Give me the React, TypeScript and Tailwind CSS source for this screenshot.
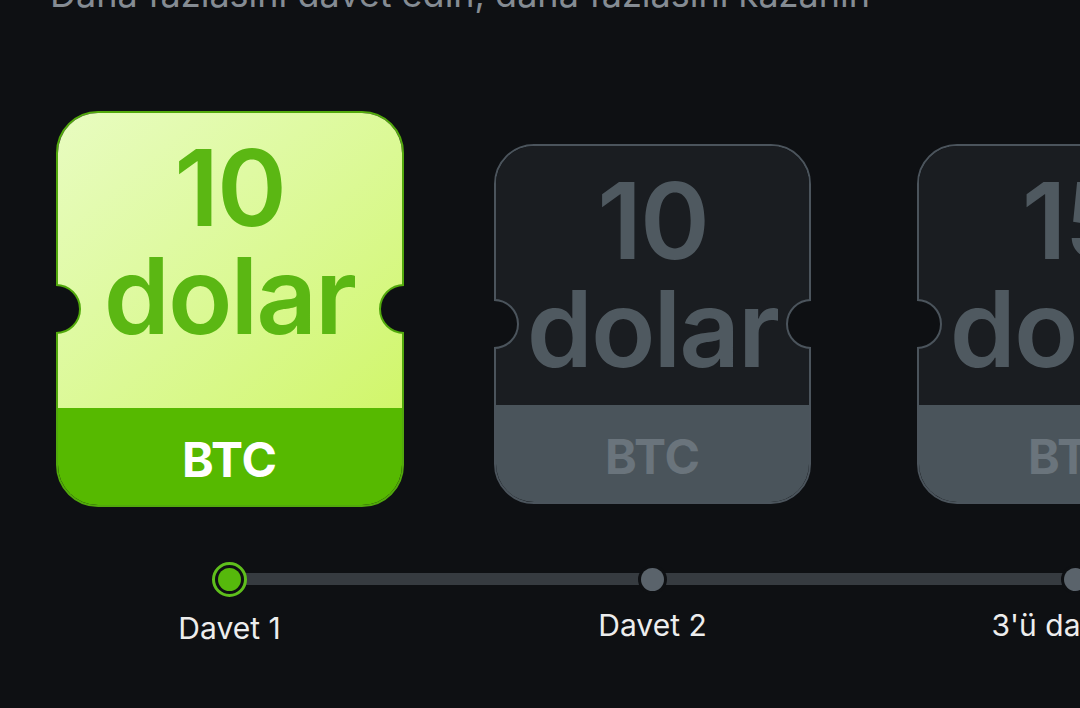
import React from 'react';

type Reward = {
    amount: string;
    unit: string;
    coin: string;
    label: string;
    active: boolean;
};

const rewards: Reward[] = [
    { amount: '10', unit: 'dolar', coin: 'BTC', label: 'Davet 1', active: true },
    { amount: '10', unit: 'dolar', coin: 'BTC', label: 'Davet 2', active: false },
    { amount: '15', unit: 'dolar', coin: 'BTC', label: "3'ü davet et", active: false },
];

const Notch: React.FC<{ side: 'left' | 'right'; active: boolean }> = ({ side, active }) => (
    <div
        className={
            'absolute top-1/2 -translate-y-1/2 w-[27px] h-[50px] overflow-hidden ' +
            (side === 'left' ? 'left-[-2px]' : 'right-[-2px]')
        }
    >
        <div
            className={
                'w-[50px] h-[50px] rounded-full border-2 bg-[#0e1013] ' +
                (side === 'left' ? 'ml-[-25px] ' : 'ml-[2px] ') +
                (active ? 'border-[#52a90c]' : 'border-[#4b545c]')
            }
        />
    </div>
);

const RewardCard: React.FC<{ reward: Reward }> = ({ reward }) => {
    const { active } = reward;
    return (
        <div
            className={
                'relative flex flex-col border-2 ' +
                (active
                    ? 'w-[348px] h-[396px] rounded-[42px] border-[#52a90c]'
                    : 'w-[317px] h-[360px] rounded-[40px] border-[#4b545c] mb-[3px]')
            }
        >
            <div
                className={
                    'flex-1 flex flex-col items-center pt-[21px] font-semibold text-[106px] leading-[108px] tracking-[-2px] ' +
                    (active
                        ? 'rounded-t-[40px] bg-linear-to-br from-[#e8fcc0] to-[#d1f66a] text-[#5bb713]'
                        : 'rounded-t-[38px] bg-[#1a1d21] text-[#4f5960]')
                }
            >
                <span>{reward.amount}</span>
                <span>{reward.unit}</span>
            </div>
            <div
                className={
                    'h-[97px] flex items-center justify-center text-[48px] font-bold pt-[6px] ' +
                    (active
                        ? 'rounded-b-[40px] bg-[#56b900] text-white'
                        : 'rounded-b-[38px] bg-[#4a545b] text-[#6a747c]')
                }
            >
                {reward.coin}
            </div>
            <Notch side="left" active={active} />
            <Notch side="right" active={active} />
        </div>
    );
};

const StepDot: React.FC<{ active: boolean }> = ({ active }) =>
    active ? (
        <div className="relative w-[35px] h-[35px] rounded-full border-[3px] border-[#5fbf1c] bg-[#0e1013] flex items-center justify-center">
            <div className="w-[23px] h-[23px] rounded-full bg-[#56b90c]" />
        </div>
    ) : (
        <div className="relative w-[29px] h-[29px] rounded-full bg-[#0e1013] flex items-center justify-center">
            <div className="w-[23px] h-[23px] rounded-full bg-[#5a636b]" />
        </div>
    );

const App: React.FC = () => {
    return (
        <div className="w-[1080px] h-[708px] overflow-hidden bg-[#0e1013] font-['Inter',sans-serif]">
            <p className="mt-[-26px] pl-[50px] text-[36px] leading-[40px] text-[#858c93] whitespace-nowrap">
                Daha fazlasını davet edin, daha fazlasını kazanın
            </p>

            {/* kartlar */}
            <div className="flex items-end pl-[18px] mt-[97px]">
                {rewards.map((r, i) => (
                    <div key={i} className="w-[423px] shrink-0 flex justify-center">
                        <RewardCard reward={r} />
                    </div>
                ))}
            </div>

            {/* ilerleme çizgisi */}
            <div className="flex pl-[18px] mt-[54px]">
                {rewards.map((r, i) => (
                    <div key={i} className="w-[423px] shrink-0 flex flex-col items-center">
                        <div className="relative w-full h-[36px] flex items-center justify-center">
                            <div
                                className={
                                    'absolute top-1/2 -translate-y-1/2 right-0 h-[12px] bg-[#363b40] ' +
                                    (i === 0 ? 'left-1/2' : 'left-0')
                                }
                            />
                            <StepDot active={r.active} />
                        </div>
                        <span
                            className={
                                'text-[30px] leading-[34px] text-[#ededed] whitespace-nowrap ' +
                                (i === 0 ? 'mt-[14px]' : 'mt-[11px]')
                            }
                        >
                            {r.label}
                        </span>
                    </div>
                ))}
            </div>
        </div>
    );
};

export default App;
